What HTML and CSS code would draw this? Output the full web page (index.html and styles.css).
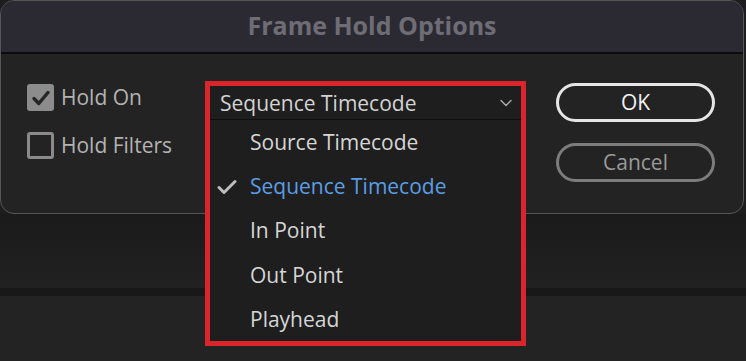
FILE: index.html
```html
<!DOCTYPE html>
<html lang="en">
<head>
<meta charset="utf-8">
<title>Frame Hold Options</title>
<link rel="stylesheet" href="styles.css">
</head>
<body>
<div class="page">
  <div class="dialog">
    <div class="titlebar">Frame Hold Options</div>
    <div class="dialog-body">
      <div class="options">
        <label class="check-row">
          <span class="box checked">
            <svg viewBox="0 0 26 26" width="26" height="26"><path d="M6 13.5 L10.8 18.5 L20 7.5" fill="none" stroke="#262626" stroke-width="3.4" stroke-linecap="round" stroke-linejoin="round"/></svg>
          </span>
          <span class="check-label">Hold On</span>
        </label>
        <label class="check-row">
          <span class="box"></span>
          <span class="check-label">Hold Filters</span>
        </label>
      </div>
      <div class="dropdown">
        <div class="select-head">
          <span>Sequence Timecode</span>
          <svg class="chevron" viewBox="0 0 12 8" width="12" height="8"><path d="M1 1.5 L6 6.5 L11 1.5" fill="none" stroke="#a8a8a8" stroke-width="1.5" stroke-linecap="round" stroke-linejoin="round"/></svg>
        </div>
        <ul class="menu">
          <li class="item">Source Timecode</li>
          <li class="item selected">
            <svg class="tick" viewBox="0 0 20 16" width="20" height="16"><path d="M2 8.5 L7 13.5 L18 2.5" fill="none" stroke="#bdbdbd" stroke-width="3" stroke-linecap="round" stroke-linejoin="round"/></svg>
            Sequence Timecode
          </li>
          <li class="item">In Point</li>
          <li class="item">Out Point</li>
          <li class="item">Playhead</li>
        </ul>
      </div>
      <div class="buttons">
        <button class="btn primary">OK</button>
        <button class="btn secondary">Cancel</button>
      </div>
    </div>
  </div>
  <div class="backdrop">
    <div class="band"></div>
  </div>
</div>
</body>
</html>
```
FILE: styles.css
```css
* { box-sizing: border-box; }
html, body { margin: 0; padding: 0; }
body {
  background: #1d1d1d;
  font-family: "Open Sans", "Noto Sans", sans-serif;
  overflow: hidden;
}
.page {
  width: 746px;
  height: 361px;
  overflow: hidden;
  background: #1d1d1d;
}
.dialog {
  width: 744px;
  height: 214px;
  border-radius: 14px;
  border: 1.5px solid #565656;
  background: #232323;
  display: flex;
  flex-direction: column;
}
.titlebar {
  height: 53px;
  flex: none;
  background: #2b2a32;
  border-radius: 13px 13px 0 0;
  border-bottom: 2px solid #0c0c0c;
  color: #6e6d76;
  font-weight: 700;
  font-size: 25px;
  line-height: 49px;
  text-align: center;
}
.dialog-body {
  flex: 1;
  display: flex;
  align-items: flex-start;
}
.options {
  margin-left: 26px;
  margin-top: 30px;
  width: 178px;
  display: flex;
  flex-direction: column;
  gap: 21px;
}
.check-row {
  display: flex;
  align-items: center;
  gap: 7px;
  height: 27px;
}
.box {
  width: 27px;
  height: 27px;
  border-radius: 3px;
  border: 3px solid #8a8a8a;
  display: flex;
  align-items: center;
  justify-content: center;
}
.box.checked {
  background: #8c8c8c;
  border: none;
}
.check-label {
  color: #b3b3b3;
  font-size: 21px;
  line-height: 27px;
}
.dropdown {
  position: relative;
  z-index: 2;
  margin-top: 27px;
  width: 321px;
  border: 5px solid #d9252b;
  background: #1e1e1e;
}
.select-head {
  height: 34px;
  border-bottom: 1px solid #0f0f0f;
  display: flex;
  align-items: center;
  justify-content: space-between;
  padding: 0 9px 0 10px;
  color: #d3d3d3;
  font-size: 21px;
}
.menu {
  list-style: none;
  margin: 0;
  padding: 0;
}
.item {
  height: 44.2px;
  display: flex;
  align-items: center;
  padding-left: 40px;
  position: relative;
  color: #d6d6d6;
  font-size: 21px;
}
.item.selected { color: #5b9de4; }
.tick {
  position: absolute;
  left: 7px;
  top: 15px;
}
.buttons {
  margin-left: 30px;
  margin-top: 29px;
  display: flex;
  flex-direction: column;
  gap: 21px;
}
.btn {
  width: 159px;
  height: 39px;
  border-radius: 20px;
  background: transparent;
  font-family: "Open Sans", "Noto Sans", sans-serif;
  font-size: 21px;
  line-height: 1;
  padding: 0;
}
.btn.primary {
  border: 3px solid #e6e6e6;
  color: #f2f2f2;
}
.btn.secondary {
  border: 3px solid #7c7c7c;
  color: #9a9a9a;
}
.backdrop {
  height: 147px;
  background: linear-gradient(#1a1a1a, #212121 70px);
  padding-top: 74px;
}
.band {
  height: 8px;
  background: #181818;
}
.backdrop::after {
  content: "";
  display: block;
  height: 65px;
  background: #232323;
}
```
